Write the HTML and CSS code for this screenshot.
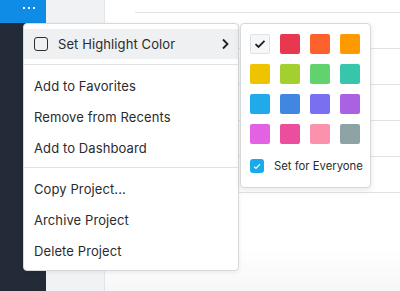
FILE: index.html
```html
<!DOCTYPE html>
<html lang="en">
<head>
  <meta charset="UTF-8" />
  <title>Project menu</title>
  <link rel="stylesheet" href="styles.css">
</head>
<body>

  <div class="app">
    <!-- Sidebar -->
    <div class="sidebar">
      <div class="more-btn">
        <span class="dot"></span><span class="dot"></span><span class="dot"></span>
      </div>
    </div>

    <div class="panel"></div>

    <!-- Main list -->
    <div class="main">
      <div class="row"></div>
      <div class="row"></div>
      <div class="row"></div>
      <div class="row"></div>
      <div class="row"></div>
      <div class="row"></div>
    </div>
  </div>

  <!-- Project menu -->
  <div class="menu">
    <div class="menu-top">
      <div class="menu-item active">
        <span class="checkbox"></span>
        <span class="label">Set Highlight Color</span>
        <svg class="chevron" width="7" height="12" viewBox="0 0 7 12">
          <path d="M1 1.5 L5.5 6 L1 10.5" fill="none" stroke="#1e1f21" stroke-width="1.8"/>
        </svg>
      </div>
    </div>
    <div class="divider"></div>
    <div class="menu-group">
      <div class="menu-item">Add to Favorites</div>
      <div class="menu-item">Remove from Recents</div>
      <div class="menu-item">Add to Dashboard</div>
    </div>
    <div class="divider"></div>
    <div class="menu-group last">
      <div class="menu-item">Copy Project...</div>
      <div class="menu-item">Archive Project</div>
      <div class="menu-item">Delete Project</div>
    </div>
  </div>

  <!-- Color submenu -->
  <div class="submenu">
    <div class="swatches">
      <div class="swatch none">
        <svg width="12" height="10" viewBox="0 0 12 10">
          <path d="M1.5 5.2 L4.5 8 L10.5 1.8" fill="none" stroke="#1e1f21" stroke-width="1.8"/>
        </svg>
      </div>
      <div class="swatch" style="background:#e8384f"></div>
      <div class="swatch" style="background:#fd612c"></div>
      <div class="swatch" style="background:#fd9a00"></div>
      <div class="swatch" style="background:#eec300"></div>
      <div class="swatch" style="background:#a4cf30"></div>
      <div class="swatch" style="background:#62d26f"></div>
      <div class="swatch" style="background:#37c5ab"></div>
      <div class="swatch" style="background:#20aaea"></div>
      <div class="swatch" style="background:#4186e0"></div>
      <div class="swatch" style="background:#7a6ff0"></div>
      <div class="swatch" style="background:#aa62e3"></div>
      <div class="swatch" style="background:#e362e3"></div>
      <div class="swatch" style="background:#ea4e9d"></div>
      <div class="swatch" style="background:#fc91ad"></div>
      <div class="swatch" style="background:#8da3a6"></div>
    </div>
    <div class="everyone">
      <span class="checkbox checked">
        <svg width="8" height="7" viewBox="0 0 8 7">
          <path d="M1 3.6 L3 5.5 L7 1.2" fill="none" stroke="#ffffff" stroke-width="1.2"/>
        </svg>
      </span>
      <span>Set for Everyone</span>
    </div>
  </div>

</body>
</html>
```

FILE: styles.css
```css
body {
  margin: 0;
  font-family: Inter, "Noto Sans", sans-serif;
  color: #1e1f21;
  overflow: hidden;
}

.app {
  display: flex;
  height: 291px;
}

.sidebar {
  width: 46px;
  background-color: #222b37;
}

.more-btn {
  height: 23px;
  background-color: #0f8ce6;
  display: flex;
  justify-content: center;
  align-items: center;
  gap: 3px;
  padding-left: 11px;
  padding-bottom: 7px;
  box-sizing: border-box;
}

.dot {
  width: 2px;
  height: 2px;
  background: white;
}

.panel {
  width: 58px;
  background-color: #f0f2f3;
  border-right: 1px solid #e2e5e7;
}

.main {
  flex: 1;
  padding-top: 12px;
  padding-left: 30px;
  background: linear-gradient(to bottom, #ffffff 85%, #f7f7f7);
}

.row {
  height: 35px;
  border-top: 1px solid #e0e3e6;
}

/* menus */

.menu {
  position: absolute;
  left: 23px;
  top: 23px;
  width: 214px;
  background: white;
  border: 1px solid #d5d9dc;
  border-radius: 4px;
  box-shadow: 0 1px 4px rgba(0, 0, 0, 0.08);
  padding: 5px 0 4px;
  font-size: 13px;
  color: #2a2b2e;
}

.menu-top {
  padding-bottom: 5px;
}

.menu-group {
  padding: 5px 0 4px;
}

.menu-group.last {
  padding-bottom: 0;
}

.menu-item {
  height: 31px;
  display: flex;
  align-items: center;
  padding: 0 10px;
  letter-spacing: 0.1px;
}

.menu-item.active {
  background-color: #eef0f1;
  height: 30px;
  padding-right: 9px;
}

.menu-item .label {
  flex: 1;
  margin-left: 10px;
}

.divider {
  height: 1px;
  background: #e0e3e6;
}

.checkbox {
  flex-shrink: 0;
  width: 14px;
  height: 14px;
  box-sizing: border-box;
  border: 1.5px solid #2b2d30;
  border-radius: 3px;
  display: flex;
  align-items: center;
  justify-content: center;
}

.checkbox.checked {
  border: none;
  background-color: #1aa9ea;
}

.submenu {
  position: absolute;
  left: 240px;
  top: 23px;
  width: 131px;
  background: white;
  border: 1px solid #d5d9dc;
  border-radius: 4px;
  box-shadow: 0 2px 6px rgba(0, 0, 0, 0.1);
  padding: 10px 9px 14px;
  box-sizing: border-box;
}

.swatches {
  display: grid;
  grid-template-columns: repeat(4, 20px);
  gap: 10px;
}

.swatch {
  width: 20px;
  height: 20px;
  border-radius: 2px;
  box-sizing: border-box;
}

.swatch.none {
  background: #f6f7f8;
  border: 1px solid #dfe1e4;
  display: flex;
  align-items: center;
  justify-content: center;
}

.everyone {
  display: flex;
  align-items: center;
  gap: 10px;
  margin-top: 15px;
  font-size: 11.3px;
  color: #2a2b2e;
  white-space: nowrap;
}
```
